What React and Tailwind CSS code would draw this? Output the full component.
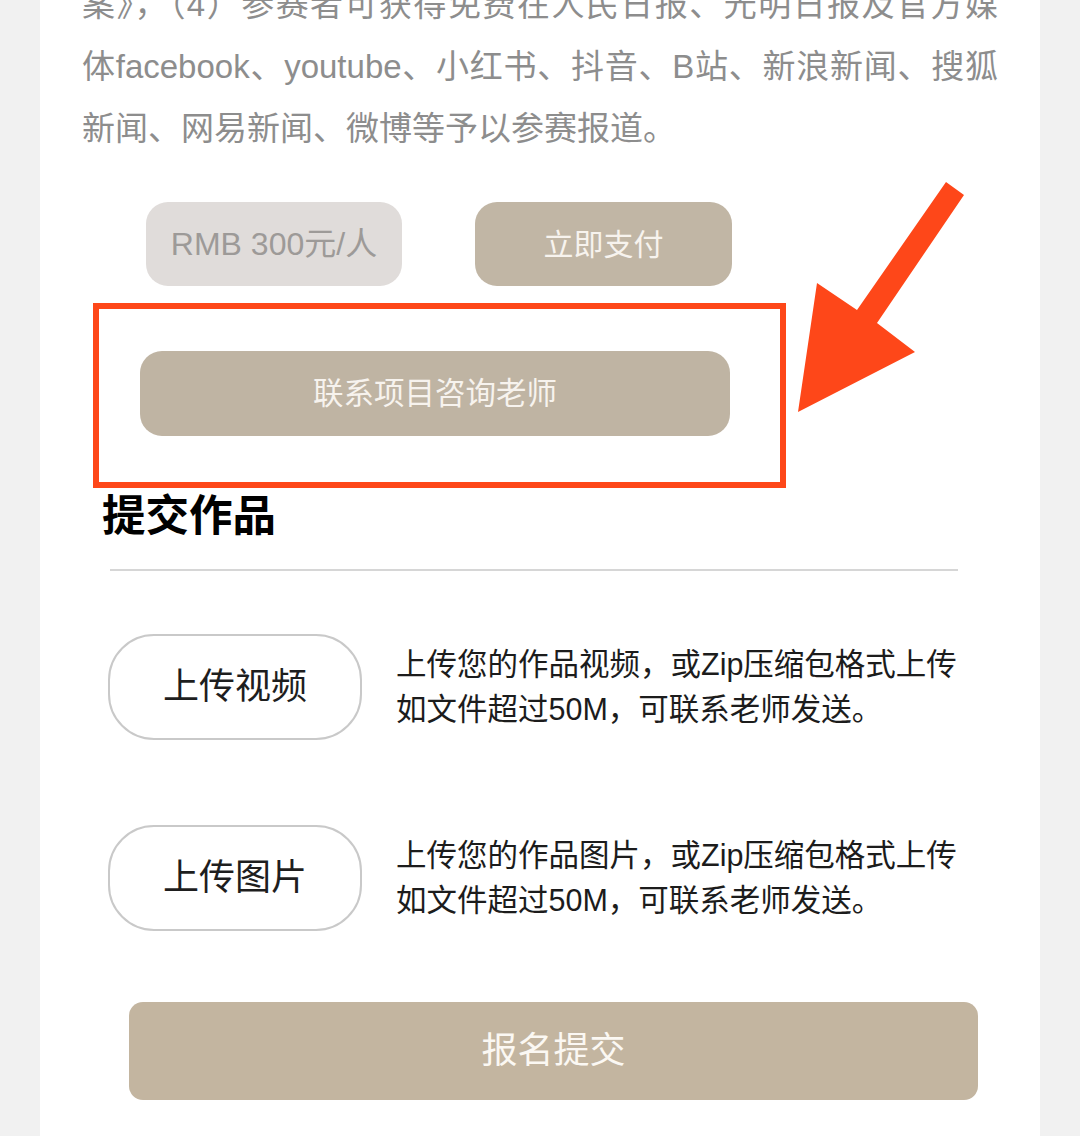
import React from 'react'

const font = { fontFamily: '"Liberation Sans", "Noto Sans CJK SC", sans-serif' }

function UploadRow({ label, desc, className }) {
  return (
    <div className={`flex items-center ${className}`}>
      <button className="ml-[68px] flex h-[106px] w-[254px] items-center justify-center rounded-[46px] border-2 border-[#c9c9c9] bg-white text-[36px] text-[#1e1e1e]">
        {label}
      </button>
      <div className="ml-[34px] text-[30.5px] leading-[45px] text-[#1c1c1c]">
        <div>{desc}</div>
        <div>如文件超过50M，可联系老师发送。</div>
      </div>
    </div>
  )
}

export default function App() {
  return (
    <div className="relative h-[1136px] w-[1080px] overflow-hidden bg-[#f1f1f1]" style={font}>
      <div className="ml-[40px] flex h-[1136px] w-[1000px] flex-col bg-white">
        <div className="-mt-[26px] px-[42px] text-[33px] leading-[62px] text-[#8d8d8d]">
          <div className="text-justify [text-align-last:justify]">案》，（4）参赛者可获得免费在人民日报、光明日报及官方媒</div>
          <div className="text-justify [text-align-last:justify]">体facebook、youtube、小红书、抖音、B站、新浪新闻、搜狐</div>
          <div>新闻、网易新闻、微博等予以参赛报道。</div>
        </div>

        <div className="mt-[42px] flex gap-[73px] pl-[106px]">
          <div className="flex h-[84px] w-[256px] items-center justify-center rounded-[22px] bg-[#e0dcda] text-[32px] text-[#9d9a98]">
            RMB 300元/人
          </div>
          <button className="flex h-[84px] w-[257px] items-center justify-center rounded-[22px] bg-[#c1b6a5] text-[30px] text-[#f7f3ee]">
            立即支付
          </button>
        </div>

        <div className="ml-[53px] mt-[17px] h-[185px] w-[693px] border-[6px] border-[#fe4719] pl-[41px] pt-[42px]">
          <button className="flex h-[85px] w-[590px] items-center justify-center rounded-[22px] bg-[#bfb4a3] text-[30.5px] text-[#f7f3ee]">
            联系项目咨询老师
          </button>
        </div>

        <h2 className="ml-[62px] mt-[4px] text-[43.5px] font-bold leading-[48px] text-black">提交作品</h2>

        <div className="ml-[70px] mt-[29px] h-[2px] w-[848px] bg-[#d6d6d6]" />

        <UploadRow className="mt-[63px]" label="上传视频" desc="上传您的作品视频，或Zip压缩包格式上传" />
        <UploadRow className="mt-[85px]" label="上传图片" desc="上传您的作品图片，或Zip压缩包格式上传" />

        <button className="ml-[89px] mt-[71px] flex h-[98px] w-[849px] items-center justify-center rounded-[14px] bg-[#c3b5a0] text-[36px] text-[#fbf8f3]">
          报名提交
        </button>
      </div>

      <svg className="pointer-events-none absolute left-0 top-0 h-[1136px] w-[1080px]" viewBox="0 0 1080 1136">
        <polygon
          points="946,182 964,195 877,323 915,352 798,412 817,283 857,310"
          fill="#fe4719"
        />
      </svg>
    </div>
  )
}
